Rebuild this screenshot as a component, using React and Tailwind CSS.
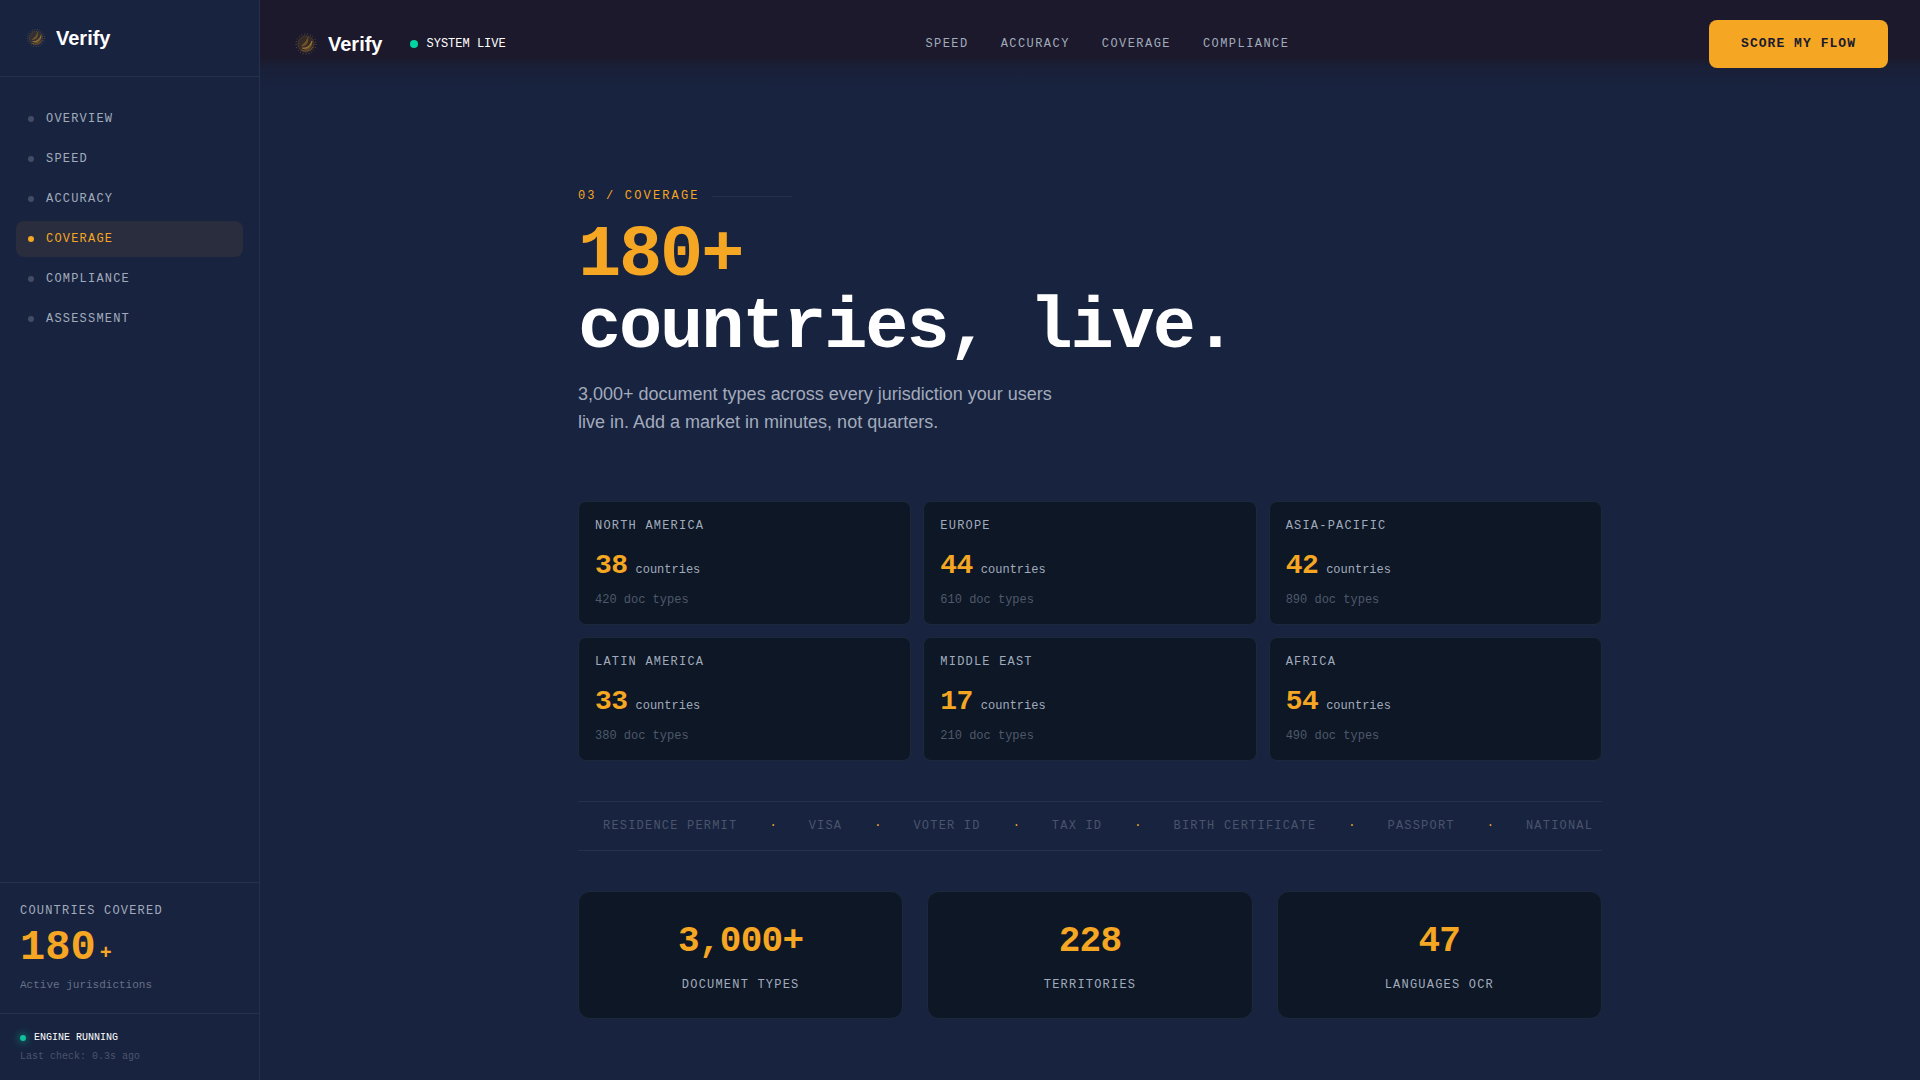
import React from "react";

const NAV_ITEMS = ["Overview", "Speed", "Accuracy", "Coverage", "Compliance", "Assessment"];
const TOP_LINKS = ["Speed", "Accuracy", "Coverage", "Compliance"];

const REGIONS = [
  { name: "North America", countries: 38, docs: 420 },
  { name: "Europe", countries: 44, docs: 610 },
  { name: "Asia-Pacific", countries: 42, docs: 890 },
  { name: "Latin America", countries: 33, docs: 380 },
  { name: "Middle East", countries: 17, docs: 210 },
  { name: "Africa", countries: 54, docs: 490 }
];

const DOCUMENTS = [
  "Residence Permit",
  "Visa",
  "Voter ID",
  "Tax ID",
  "Birth Certificate",
  "Passport",
  "National ID"
];

const STATS = [
  { value: "3,000+", label: "Document types" },
  { value: "228", label: "Territories" },
  { value: "47", label: "Languages OCR" }
];

function LogoMark({ className }) {
  return (
    <svg viewBox="0 0 28 28" fill="none" className={className} aria-hidden="true">
      <circle cx="14" cy="14" r="10" stroke="#8a7a5c" strokeWidth="1" strokeDasharray="1 2" opacity="0.6" />
      <circle cx="14" cy="14" r="8.5" fill="#5a4424" opacity="0.4" />
      <circle cx="14" cy="14" r="8" stroke="#94713a" strokeWidth="1" strokeDasharray="1 1.5" opacity="0.5" />
      <path d="M9 16C11 14 15 11 16 6c1 3 0 7-2 9-2 1-4 2-5 1z" fill="#8a6229" opacity="0.7" />
      <path d="M10 18c4 0 8-3 10-8 1 5-1 9-5 10-2 0-4-1-5-2z" fill="#8a6529" opacity="0.6" />
      <path d="M10 18c5 1 9-2 10-7" stroke="#c99a4c" strokeWidth="0.9" opacity="0.7" />
      <path d="M9 20c4 2 9 1 12-3" stroke="#a87832" strokeWidth="1" opacity="0.5" />
    </svg>
  );
}

function Sidebar() {
  return (
    <aside className="sticky top-0 flex h-screen w-[260px] shrink-0 flex-col border-r border-[#263149]">
      <a href="#overview" className="flex items-center gap-2 border-b border-[#263149] p-6">
        <LogoMark className="h-6 w-6" />
        <span className="text-xl leading-7 font-bold text-white">Verify</span>
      </a>
      <nav className="flex flex-1 flex-col gap-1 px-4 py-6">
        {NAV_ITEMS.map((item) => {
          const active = item === "Coverage";
          return (
            <a
              key={item}
              href={`#${item.toLowerCase()}`}
              className={`flex items-center gap-3 rounded-lg px-3 py-2.5 font-[Liberation_Mono,monospace] text-xs leading-4 tracking-widest uppercase ${
                active ? "bg-[#2a2d3d] text-[#f5a623]" : "text-[#a2abbc]"
              }`}
            >
              <span className={`h-1.5 w-1.5 rounded-full ${active ? "bg-[#f5a623]" : "bg-[#424c65]"}`} />
              {item}
            </a>
          );
        })}
      </nav>
      <div className="border-t border-[#263149] p-5 font-[Liberation_Mono,monospace]">
        <div className="text-xs leading-4 tracking-widest text-[#a2abbc] uppercase">Countries covered</div>
        <div className="mt-1 flex items-baseline gap-1 font-bold text-[#f5a623]">
          <span className="text-[42px] leading-[50px]">180</span>
          <span className="text-xl">+</span>
        </div>
        <div className="mt-1 text-[11px] leading-4 text-[#667086]">Active jurisdictions</div>
      </div>
      <div className="border-t border-[#263149] px-5 py-4 font-[Liberation_Mono,monospace] text-[10px] leading-[15px]">
        <div className="flex items-center gap-2 text-white uppercase">
          <span className="h-1.5 w-1.5 rounded-full bg-[#12c29b] shadow-[0_0_8px_#00d4a0]" />
          Engine running
        </div>
        <div className="mt-1 text-[#4a546c]">Last check: 0.3s ago</div>
      </div>
    </aside>
  );
}

function TopBar() {
  return (
    <header className="flex h-[88px] items-center justify-between bg-linear-to-b from-[#1b192b] from-65% via-[#191f37] via-75% to-[#18233f] px-8">
      <div className="flex items-center gap-7">
        <a href="#overview" className="flex items-center gap-2">
          <LogoMark className="h-7 w-7" />
          <span className="text-xl leading-7 font-bold text-white">Verify</span>
        </a>
        <div className="flex items-center gap-2 font-[Liberation_Mono,monospace] text-xs leading-4 text-white uppercase">
          <span className="h-2 w-2 rounded-full bg-[#00d4a0]" />
          System live
        </div>
      </div>
      <nav className="flex gap-8">
        {TOP_LINKS.map((link) => (
          <a
            key={link}
            href={`#${link.toLowerCase()}`}
            className="font-[Liberation_Mono,monospace] text-xs leading-4 tracking-[0.12em] text-[#a2abbc] uppercase"
          >
            {link}
          </a>
        ))}
      </nav>
      <button
        type="button"
        className="h-12 rounded-lg bg-[#f5a623] px-8 font-[Liberation_Mono,monospace] text-[13px] font-bold tracking-[0.08em] text-[#1a1a2e] uppercase"
      >
        Score my flow
      </button>
    </header>
  );
}

function RegionCard({ region }) {
  return (
    <div className="rounded-lg border border-[#1d293b] bg-[#0d1726] p-4 font-[Liberation_Mono,monospace] text-xs leading-4">
      <div className="tracking-widest text-[#a2abbc] uppercase">{region.name}</div>
      <div className="mt-3.5 flex items-baseline gap-2 text-[#a2abbc]">
        <span className="text-[28px] leading-9 font-bold tracking-[-0.02em] text-[#f5a623]">{region.countries}</span>
        countries
      </div>
      <div className="mt-2 text-[#4f596b]">{region.docs} doc types</div>
    </div>
  );
}

function DocumentTicker() {
  return (
    <div className="mt-10 overflow-hidden border-y border-[#263149] py-4">
      <div className="flex gap-8 pl-[25px] font-[Liberation_Mono,monospace] text-xs leading-4 whitespace-nowrap text-[#4a546c]">
        {DOCUMENTS.map((doc) => (
          <React.Fragment key={doc}>
            <span className="tracking-widest uppercase">{doc}</span>
            <span className="text-[#f5a623]">·</span>
          </React.Fragment>
        ))}
      </div>
    </div>
  );
}

export default function App() {
  return (
    <div className="flex min-h-screen bg-[#18233f] font-[Liberation_Sans,sans-serif]">
      <Sidebar />
      <div className="min-w-0 flex-1">
        <TopBar />
        <main className="mx-auto w-full max-w-5xl pt-[100px] pb-14">
          <div className="flex items-center gap-3 font-[Liberation_Mono,monospace] text-xs leading-4 tracking-[0.18em] text-[#f5a623] uppercase">
            03 / Coverage
            <span className="h-px w-20 bg-[#263149]" />
          </div>
          <h1 className="mt-4 font-[Liberation_Mono,monospace] text-7xl leading-none font-bold tracking-[-0.03em] text-white">
            <span className="text-[#f5a623]">180+</span>
            <br />
            countries, live.
          </h1>
          <p className="mt-4 max-w-[480px] text-lg leading-7 text-[#a2abbc]">
            3,000+ document types across every jurisdiction your users live in. Add a market in minutes, not quarters.
          </p>
          <div className="mt-[65px] grid grid-cols-3 gap-3">
            {REGIONS.map((region) => (
              <RegionCard key={region.name} region={region} />
            ))}
          </div>
          <DocumentTicker />
          <div className="mt-10 grid grid-cols-3 gap-6">
            {STATS.map((stat) => (
              <div
                key={stat.label}
                className="rounded-xl border border-[#1d293b] bg-[#0d1726] p-6 text-center font-[Liberation_Mono,monospace]"
              >
                <div className="text-4xl leading-[52px] font-bold tracking-[-0.02em] text-[#f5a623]">{stat.value}</div>
                <div className="mt-2 text-xs leading-[18px] tracking-widest text-[#a2abbc] uppercase">{stat.label}</div>
              </div>
            ))}
          </div>
        </main>
      </div>
    </div>
  );
}
